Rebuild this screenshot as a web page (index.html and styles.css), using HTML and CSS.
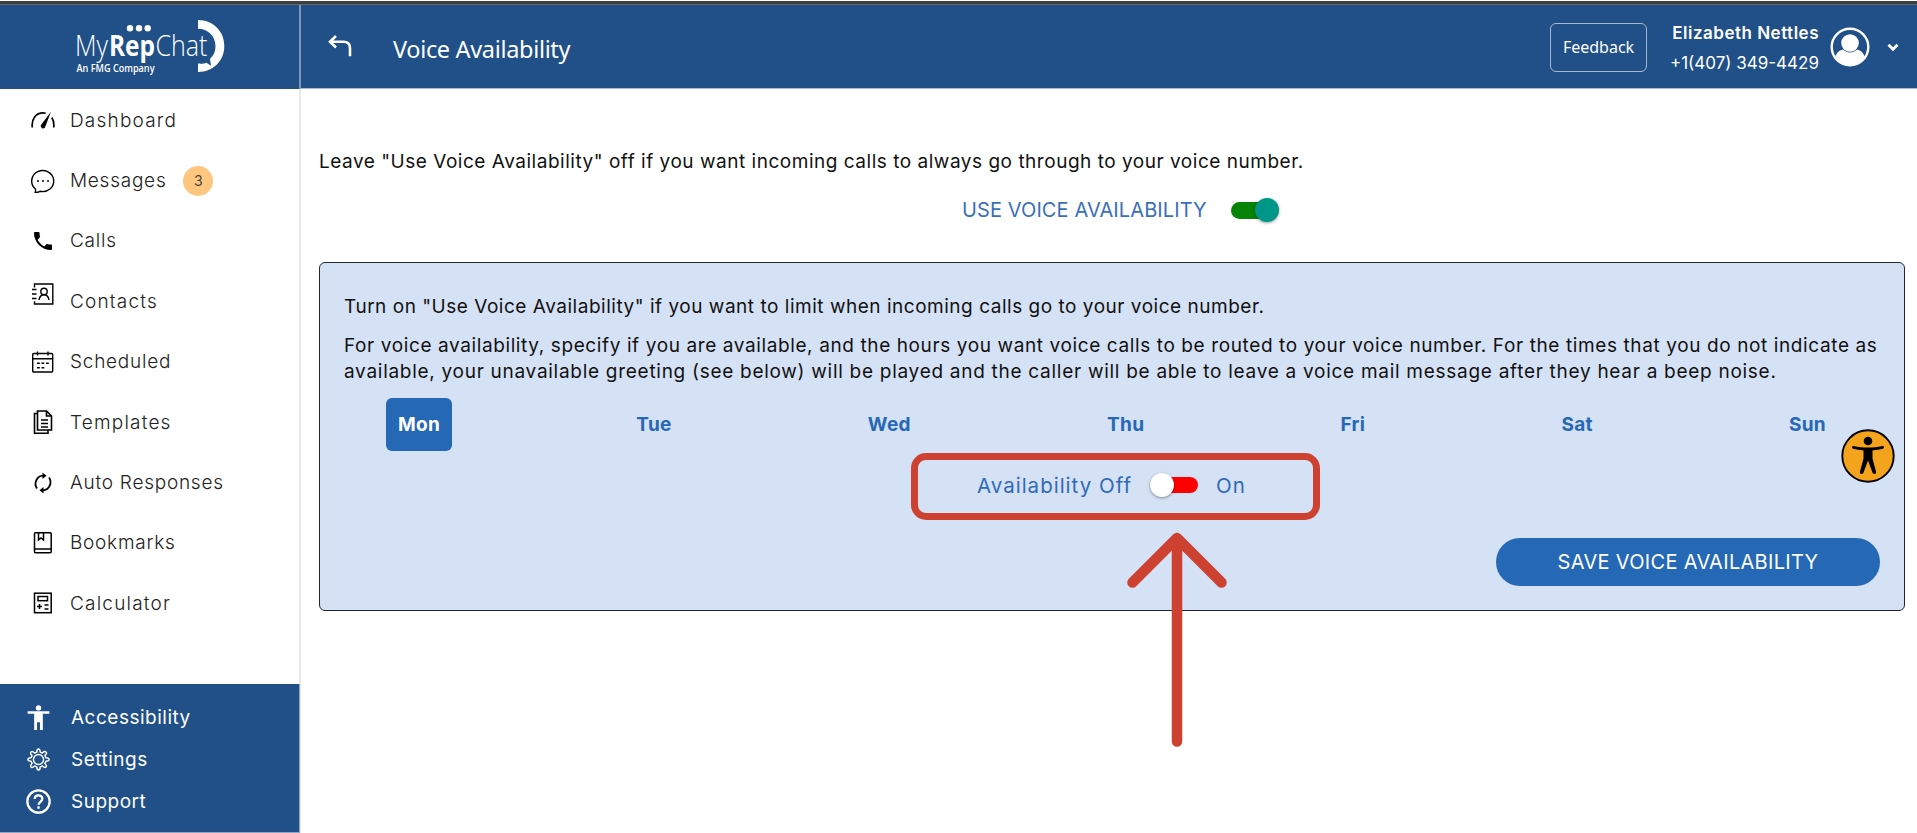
FILE: index.html
```html
<!DOCTYPE html>
<html lang="en">
<head>
<meta charset="utf-8">
<title>Voice Availability - MyRepChat</title>
<link rel="stylesheet" href="styles.css">
</head>

<body>

<div class="window-edge"></div>

<div class="app">

<aside class="sidebar">
<div class="brand">
<svg class="logo" width="152" height="58" viewBox="0 0 152 58">
<g fill="#ffffff">
<circle cx="54" cy="9.300" r="3.200"/>
<circle cx="63" cy="9.300" r="3.200"/>
<circle cx="71.700" cy="9.300" r="3.200"/>
<path d="M122,1c15,0 26.300,11 26.300,26s-11.300,26 -26.300,26v-8.500c4,.4 6,0 8.500,-.8l4.500,3l-1,-7c3.500,-3 5.500,-7 5.500,-12.500c0,-10 -7.500,-17.500 -17.500,-17.500z"/>
</g>
<text class="logo-name" x="-1" y="36.500" textLength="33" lengthAdjust="spacingAndGlyphs">My</text>
<text class="logo-name logo-strong" x="33" y="36.500" textLength="46" lengthAdjust="spacingAndGlyphs">Rep</text>
<text class="logo-name" x="79.500" y="36.500" textLength="52" lengthAdjust="spacingAndGlyphs">Chat</text>
<text class="logo-sub" x="0.500" y="53.300" textLength="78" lengthAdjust="spacingAndGlyphs">An FMG Company</text>
</svg>
</div>

<nav class="menu">
<a class="menu-item">
<svg class="icon" viewBox="0 0 24 24"><path d="M1.300,19.500C.2,11 5,4.900 12,4.900c1,0 1.800,.1 2.600,.4" fill="none" stroke="#000" stroke-width="1.700"/><path d="M20,3.800L14.500,18a2.400,2.400 0 1 1,-4,-1.800z"/><path d="M20.800,9.500c2,3 2.300,6.500 1.900,10" fill="none" stroke="#000" stroke-width="1.700"/></svg>
<span class="label label-wide">Dashboard</span>
</a>
<a class="menu-item">
<svg class="icon" viewBox="0 0 24 24"><path d="M4.200,19.800A11,10.500 0 1 1,9,22.300c-2,1 -3.600,1.200 -4.800,1c.6,-1.200 .6,-2.300 0,-3.500z" fill="none" stroke="#000" stroke-width="1.400"/><circle cx="7" cy="12" r="1"/><circle cx="12" cy="12" r="1"/><circle cx="17" cy="12" r="1"/></svg>
<span class="label">Messages</span>
<span class="count">3</span>
</a>
<a class="menu-item">
<svg class="icon" viewBox="0 0 24 24"><path d="M3,4c0,-.6 .4,-1 1,-1h3.500c.6,0 1,.4 1,1c0,1.300 .2,2.500 .6,3.600c.1,.4 0,.8 -.3,1l-2.200,2.200c1.500,2.900 3.800,5.200 6.600,6.600l2.200,-2.200c.3,-.3 .7,-.4 1,-.2c1.200,.4 2.400,.5 3.600,.5c.6,0 1,.5 1,1v3.500c0,.6 -.4,1 -1,1C10.600,21 3,13.400 3,4z"/></svg>
<span class="label">Calls</span>
</a>
<a class="menu-item">
<svg class="icon icon-raised" viewBox="0 0 24 24" fill="none" stroke="#000" stroke-width="1.400"><path d="M3.500,5.500V2h18.300v20H3.500v-2.800M1,7.500h4.500M1,12h4.500M1,16.500h4.500"/><circle cx="13" cy="9.500" r="3.200"/><path d="M8,18c.5,-3.500 2,-5.300 5,-5.300s4.500,1.800 5,5.300"/></svg>
<span class="label label-wide">Contacts</span>
</a>
<a class="menu-item">
<svg class="icon" viewBox="0 0 24 24" fill="none" stroke="#000" stroke-width="1.400"><rect x="1.700" y="3.500" width="20" height="18.500" rx="1"/><path d="M1.700,8.700h20M6.500,1.500v4M17,1.500v4M6,13.300h2.800M10.500,13.300h2.800M15,13.300h2.800M6,17.800h2.800M10.500,17.800h2.800"/></svg>
<span class="label">Scheduled</span>
</a>
<a class="menu-item">
<svg class="icon" viewBox="0 0 24 24" fill="none" stroke="#000" stroke-width="1.600"><path d="M6.500,1h9l5,5v14h-14zM15.500,1v5h5M6.500,3.500h-3v19.700h13.500v-3M10,10h7M10,13.500h7M10,17h7"/></svg>
<span class="label label-wide">Templates</span>
</a>
<a class="menu-item">
<svg class="icon" viewBox="0 0 24 24"><path d="M6,17.500C2.500,12.500 5.500,5 12,4.700M18,6.500C21.500,11.500 18.500,19 12,19.300" fill="none" stroke="#000" stroke-width="1.800"/><path d="M11.500,1.500l4,3.200l-4,3.400zM12.500,16l-4,3.300l4,3.200z"/></svg>
<span class="label">Auto Responses</span>
</a>
<a class="menu-item">
<svg class="icon" viewBox="0 0 24 24" fill="none" stroke="#000" stroke-width="1.500"><rect x="3.500" y="1.700" width="16.700" height="20" rx="1"/><path d="M3.500,18h16.700M7.500,2v7l2.500,-2l2.500,2V2"/></svg>
<span class="label">Bookmarks</span>
</a>
<a class="menu-item">
<svg class="icon" viewBox="0 0 24 24" fill="none" stroke="#000" stroke-width="1.500"><rect x="3.500" y="2.200" width="16.700" height="19.500"/><rect x="7" y="5.500" width="9.500" height="4.200"/><path d="M6,15.500h5M8.500,13v5M13.500,14h4M13.500,18h4"/></svg>
<span class="label label-wide">Calculator</span>
</a>
</nav>

<div class="side-footer">
<a class="footer-item">
<svg class="footer-icon" viewBox="0 0 26 26" fill="#ffffff"><circle cx="13" cy="3" r="2.800"/><path d="M1.700,6.500h22.600v2.700h-6.800V26h-3v-8h-3v8h-3V9.200H1.700z"/></svg>
<span class="footer-label">Accessibility</span>
</a>
<a class="footer-item">
<svg class="footer-icon" viewBox="0 0 26 26" fill="none" stroke="#ffffff" stroke-width="1.500" stroke-linejoin="round"><circle cx="13" cy="13" r="5.300"/><path d="M11.200,5.300C11.300,3 11.600,2 13,2s1.700,1 1.800,3.300l2.300,1C18.800,4.600 19.800,4.200 20.800,5.200s.6,2 -1.100,3.700l1,2.300c2.300,.1 3.300,.4 3.300,1.800s-1,1.700 -3.300,1.800l-1,2.300c1.700,1.700 2.100,2.700 1.100,3.700s-2,.6 -3.700,-1.100l-2.300,1C14.700,23 14.400,24 13,24s-1.700,-1 -1.800,-3.300l-2.300,-1C7.200,21.400 6.200,21.800 5.200,20.800s-.6,-2 1.100,-3.700l-1,-2.300C3,14.700 2,14.400 2,13s1,-1.700 3.300,-1.800l1,-2.300C4.600,7.200 4.200,6.200 5.200,5.200s2,-.6 3.700,1.100z"/></svg>
<span class="footer-label">Settings</span>
</a>
<a class="footer-item">
<svg class="footer-icon" viewBox="0 0 26 26" fill="none" stroke="#ffffff" stroke-width="2.400"><circle cx="13" cy="13" r="11.600"/><path d="M9,10.500c0,-5 8,-5 8,-.3c0,3 -4,3.300 -4,6.300M13,18v2.500"/></svg>
<span class="footer-label">Support</span>
</a>
</div>
</aside>

<div class="page">
<header class="topbar">
<svg class="back" width="26" height="24" viewBox="0 0 26 24" fill="none" stroke="#ffffff" stroke-width="2.600"><path d="M9,1L3,6.700l6,5.800M3,6.700h13.500c4.500,0 6.500,2.300 6.500,6.500v8"/></svg>
<h1 class="title">Voice Availability</h1>
<button class="feedback">Feedback</button>
<div class="user">
<span class="user-name">Elizabeth Nettles</span>
<span class="user-phone">+1(407) 349-4429</span>
</div>
<svg class="avatar" width="40" height="40" viewBox="0 0 40 40"><circle cx="20" cy="20" r="18.300" fill="none" stroke="#ffffff" stroke-width="2.400"/><path d="M5,31c1,-5 4,-7.500 8,-8.500c4,4 10,4 14,0c4,1 7,3.500 8,8.500c-3,4.500 -8,7.500 -15,7.500s-12,-3 -15,-7.500z" fill="#ffffff"/><circle cx="20" cy="16" r="8.800" fill="#ffffff"/></svg>
<svg class="caret" width="12" height="9" viewBox="0 0 12 9"><path d="M1.500,1.800L6,6.300l4.500,-4.500" fill="none" stroke="#ffffff" stroke-width="2.800"/></svg>
</header>

<main class="content">
<p class="intro">Leave "Use Voice Availability" off if you want incoming calls to always go through to your voice number.</p>

<div class="use-voice">
<span class="use-voice-label">USE VOICE AVAILABILITY</span>
<span class="switch switch-on"></span>
</div>

<section class="panel">
<p class="lead">Turn on "Use Voice Availability" if you want to limit when incoming calls go to your voice number.</p>
<p class="details"><span class="details-first">For voice availability, specify if you are available, and the hours you want voice calls to be routed to your voice number. For the times that you do not indicate as</span><br><span class="details-second">available, your unavailable greeting (see below) will be played and the caller will be able to leave a voice mail message after they hear a beep noise.</span></p>

<div class="days">
<span class="day day-active">Mon</span>
<span class="day">Tue</span>
<span class="day">Wed</span>
<span class="day">Thu</span>
<span class="day">Fri</span>
<span class="day">Sat</span>
<span class="day">Sun</span>
</div>

<div class="availability">
<span class="availability-off">Availability Off</span>
<span class="switch switch-off"></span>
<span class="availability-on">On</span>
</div>

<button class="save">SAVE VOICE AVAILABILITY</button>
</section>
</main>
</div>

</div>

<!-- callout round the availability switch -->
<div class="callout"></div>
<svg class="callout-arrow" width="104" height="220" viewBox="0 0 104 220"><path d="M52,6V209.500M7.500,50.500L52,6L96.500,50.500" fill="none" stroke="#cd4131" stroke-width="10.500" stroke-linecap="round" stroke-linejoin="round"/></svg>

<svg class="a11y" width="54" height="54" viewBox="0 0 54 54"><circle cx="27" cy="27" r="25.700" fill="#f4a31d" stroke="#000" stroke-width="1.900"/><circle cx="27" cy="12" r="4.300"/><path d="M12.500,17c5,1.300 9,1.600 14.500,1.600s9.500,-.3 14.500,-1.600c1.800,-.2 2,2.300 .3,2.800c-3,.8 -6.500,1.300 -10.300,1.600v8l3.600,13.600c.4,2 -2.800,2.800 -3.500,.8L27,31.500l-4.600,12.300c-.7,2 -3.900,1.200 -3.500,-.8l3.600,-13.600v-8c-3.800,-.3 -7.300,-.8 -10.300,-1.600c-1.700,-.5 -1.500,-3 .3,-2.800z"/></svg>

</body>
</html>
```
FILE: styles.css
```css
body {
  margin: 0;
  height: 833px;
  display: flex;
  flex-direction: column;
  overflow: hidden;
  background-color: #ffffff;
  color: #111111;
  font-family: Inter, "Open Sans", sans-serif;
  font-size: 19px;
}

p, h1 {
  margin: 0;
  font-weight: normal;
}

button {
  font-family: inherit;
  color: #ffffff;
  padding: 0;
  white-space: nowrap;
}

.window-edge {
  height: 3px;
  background-color: #3f403e;
  border-top: 1px solid #ffffff;
  border-bottom: 1px solid #656765;
}

.app {
  flex: 1;
  display: flex;
  min-height: 0;
}

/* sidebar */

.sidebar {
  width: 299px;
  display: flex;
  flex-direction: column;
  border-right: 2px solid #eaeaea;
}

.brand {
  height: 84px;
  background-color: #205087;
  border-right: 2px solid #8297b4;
  margin-right: -2px;
  box-sizing: border-box;
  padding: 14px 0 0 76px;
}

.logo {
  display: block;
  overflow: visible;
}

.logo-name {
  font-family: "Open Sans", sans-serif;
  font-size: 28.5px;
  font-weight: 300;
  fill: #ffffff;
}

.logo-strong {
  font-weight: 700;
}

.logo-sub {
  font-family: "Open Sans", sans-serif;
  font-size: 10.5px;
  font-weight: 600;
  fill: #ffffff;
}

.menu {
  flex: 1;
  padding-top: 1px;
}

.menu-item {
  display: flex;
  align-items: center;
  height: 60.4px;
  padding-left: 31px;
  color: #222222;
  font-weight: 300;
}

.icon {
  width: 24px;
  height: 24px;
  margin-right: 15px;
}

.icon-raised {
  margin-top: -14px;
}

.label {
  letter-spacing: 0.75px;
}

.label-wide {
  letter-spacing: 1.2px;
}

.count {
  width: 30px;
  height: 30px;
  margin-left: 17px;
  border-radius: 50%;
  background-color: #ffc680;
  color: #444444;
  font-size: 14px;
  font-weight: 400;
  line-height: 30px;
  text-align: center;
}

.side-footer {
  height: 132px;
  padding: 12px 0 4px 26px;
  border-right: 1px solid #8fa7c4;
  margin-right: -1px;
  border-bottom: 1px solid #8fa7c4;
  background-color: #205087;
}

.footer-item {
  display: flex;
  align-items: center;
  height: 42px;
  color: #ffffff;
}

.footer-icon {
  width: 25px;
  height: 25px;
  margin-right: 20px;
}

.footer-label {
  letter-spacing: 0.5px;
}

/* top bar */

.page {
  flex: 1;
  display: flex;
  flex-direction: column;
  min-width: 0;
}

.topbar {
  height: 82px;
  display: flex;
  align-items: center;
  padding: 1px 18px 0 0;
  border-bottom: 1px solid #a9bbd0;
  background-color: #205087;
  color: #ffffff;
}

.back {
  margin-left: 26px;
}

.title {
  flex: 1;
  margin-left: 40px;
  padding-top: 3px;
  font-family: "Noto Sans", sans-serif;
  font-size: 23.5px;
  letter-spacing: -0.33px;
}

.feedback {
  width: 97px;
  height: 49px;
  border: 1px solid #a6b9cf;
  border-radius: 6px;
  background: none;
  font-family: "Noto Sans", sans-serif;
  font-size: 16px;
}

.user {
  display: flex;
  flex-direction: column;
  align-items: flex-end;
  width: 172px;
  padding-top: 1px;
  line-height: 30px;
  font-size: 17px;
}

.user-name {
  font-weight: 600;
  letter-spacing: 0.5px;
}

.avatar {
  margin-left: 11px;
}

.caret {
  margin-left: 17px;
}

/* content */

.content {
  padding: 60px 12px 0 18px;
}

.intro {
  line-height: 26px;
  letter-spacing: 0.52px;
  white-space: nowrap;
}

.use-voice {
  display: flex;
  align-items: center;
  height: 26px;
  margin: 22px 0 0 643px;
  color: #3a70b7;
}

.use-voice-label {
  width: 269px;
  font-size: 20px;
  letter-spacing: 0.1px;
  white-space: nowrap;
}

.switch {
  position: relative;
  width: 42px;
  height: 17px;
  border-radius: 9px;
}

.switch::after {
  content: "";
  position: absolute;
  top: -3.500px;
  width: 24px;
  height: 24px;
  border-radius: 50%;
  box-shadow: 0 1px 3px rgba(0, 0, 0, 0.4);
}

.switch-on {
  background-color: #078307;
}

.switch-on::after {
  right: -6px;
  background-color: #009688;
}

.switch-off {
  height: 16px;
  background-color: #ff0000;
}

.switch-off::after {
  left: -6px;
  top: -4px;
  background-color: #ffffff;
}

.panel {
  height: 347px;
  margin-top: 39px;
  display: flex;
  flex-direction: column;
  border: 1px solid #22252b;
  border-radius: 6px;
  background-color: #d5e1f5;
}

.lead, .details {
  margin-left: 24px;
  line-height: 26px;
  white-space: nowrap;
}

.lead {
  margin-top: 31px;
  letter-spacing: 0.52px;
}

.details {
  margin-top: 13px;
}

.details-first {
  letter-spacing: 0.61px;
}

.details-second {
  letter-spacing: 0.72px;
}

.days {
  display: flex;
  justify-content: space-between;
  margin: 13px 66px 0 66px;
}

.day {
  height: 53px;
  padding: 0 12px;
  border-radius: 6px;
  color: #2568b5;
  font-weight: 700;
  letter-spacing: 0.3px;
  line-height: 53px;
}

.day-active {
  background-color: #2568b5;
  color: #ffffff;
}

.availability {
  display: flex;
  align-items: center;
  height: 26px;
  margin: 21px 0 0 657px;
  color: #2f6bb5;
  font-size: 20.5px;
  letter-spacing: 1px;
  white-space: nowrap;
}

.availability-off {
  width: 179px;
}

.availability-on {
  margin-left: 18px;
}

.save {
  width: 384px;
  height: 48px;
  margin: 40px 24px 0 auto;
  border: none;
  border-radius: 24px;
  background-color: #2568b5;
  font-size: 20px;
  letter-spacing: 0.3px;
}

/* overlays */

.callout {
  position: absolute;
  left: 911px;
  top: 453px;
  width: 395px;
  height: 53px;
  border: 7px solid #cd4131;
  border-radius: 15px;
}

.callout-arrow {
  position: absolute;
  left: 1125px;
  top: 532px;
}

.a11y {
  position: absolute;
  left: 1841px;
  top: 429px;
}
```
